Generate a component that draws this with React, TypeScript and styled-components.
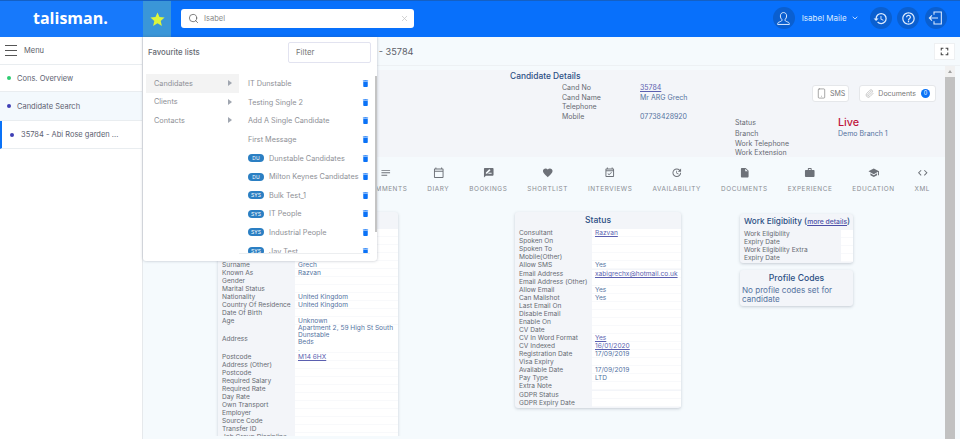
import * as React from "react";
import styled, { createGlobalStyle } from "styled-components";
import { Search, X, Smartphone, Paperclip, ChevronDown } from "lucide-react";
import {
  MdNotes,
  MdOutlineCalendarToday,
  MdRateReview,
  MdFavorite,
  MdOutlineEventAvailable,
  MdOutlineUpdate,
  MdInsertDriveFile,
  MdWork,
  MdSchool,
  MdCode,
  MdDelete,
  MdStar,
  MdRestore,
  MdHelpOutline,
  MdFullscreen,
} from "react-icons/md";

const GlobalStyle = createGlobalStyle`
  html, body {
    margin: 0;
    padding: 0;
    height: 100%;
    overflow: hidden;
    background: #f5fafd;
    font-family: Inter, "Open Sans", sans-serif;
  }
  * { box-sizing: border-box; }
`;

type Row = { label: string; value?: string; link?: boolean; tall?: boolean; gap?: boolean };

const personalRows: Row[] = [
  { label: "Title", value: "Mr" },
  { label: "Forename", value: "ARG" },
  { label: "Middle Name" },
  { label: "Preferred Name" },
  { label: "Surname", value: "Grech" },
  { label: "Known As", value: "Razvan" },
  { label: "Gender" },
  { label: "Marital Status" },
  { label: "Nationality", value: "United Kingdom" },
  { label: "Country Of Residence", value: "United Kingdom" },
  { label: "Date Of Birth" },
  { label: "Age", value: "Unknown" },
  { label: "Address", value: "Apartment 2, 59 High St South\nDunstable\nBeds\n.", tall: true },
  { label: "Postcode", value: "M14 6HX", link: true },
  { label: "Address (Other)" },
  { label: "Postcode" },
  { label: "Required Salary" },
  { label: "Required Rate" },
  { label: "Day Rate" },
  { label: "Own Transport" },
  { label: "Employer" },
  { label: "Source Code" },
  { label: "Transfer ID" },
  { label: "Job Group Discipline" },
];

const statusRows: Row[] = [
  { label: "Consultant", value: "Razvan", link: true },
  { label: "Spoken On" },
  { label: "Spoken To" },
  { label: "Mobile(Other)" },
  { label: "Allow SMS", value: "Yes" },
  { label: "Email Address", value: "xabigrechx@hotmail.co.uk", link: true, gap: true },
  { label: "Email Address (Other)" },
  { label: "Allow Email", value: "Yes" },
  { label: "Can Mailshot", value: "Yes" },
  { label: "Last Email On" },
  { label: "Disable Email" },
  { label: "Enable On" },
  { label: "CV Date" },
  { label: "CV In Word Format", value: "Yes", link: true },
  { label: "CV Indexed", value: "16/01/2020", link: true },
  { label: "Registration Date", value: "17/09/2019" },
  { label: "Visa Expiry" },
  { label: "Available Date", value: "17/09/2019" },
  { label: "Pay Type", value: "LTD" },
  { label: "Extra Note" },
  { label: "GDPR Status", gap: true },
  { label: "GDPR Expiry Date" },
];

const tabs = [
  { label: "COMMENTS", icon: <MdNotes /> },
  { label: "DIARY", icon: <MdOutlineCalendarToday /> },
  { label: "BOOKINGS", icon: <MdRateReview /> },
  { label: "SHORTLIST", icon: <MdFavorite /> },
  { label: "INTERVIEWS", icon: <MdOutlineEventAvailable /> },
  { label: "AVAILABILITY", icon: <MdOutlineUpdate /> },
  { label: "DOCUMENTS", icon: <MdInsertDriveFile /> },
  { label: "EXPERIENCE", icon: <MdWork /> },
  { label: "EDUCATION", icon: <MdSchool /> },
  { label: "XML", icon: <MdCode /> },
];

const favourites = [
  { name: "IT Dunstable" },
  { name: "Testing Single 2" },
  { name: "Add A Single Candidate" },
  { name: "First Message" },
  { name: "Dunstable Candidates", tag: "DU" },
  { name: "Milton Keynes Candidates", tag: "DU" },
  { name: "Bulk Test_1", tag: "SYS" },
  { name: "IT People", tag: "SYS" },
  { name: "Industrial People", tag: "SYS" },
  { name: "Jay Test", tag: "SYS" },
];

const UserIcon = () => (
  <svg width="15" height="15" viewBox="0 0 24 24" fill="none" stroke="currentColor" strokeWidth="1.6">
    <path d="M12 2.5c-3 0-5 2.3-5 5.4 0 2.4 1 4.4 2.4 5.6v1.7c0 1-3.4 2-5.4 3-1 .5-1.4 1.3-1.4 3.3h18.8c0-2-.4-2.8-1.4-3.3-2-1-5.4-2-5.4-3v-1.700c1.400-1.200 2.400-3.200 2.400-5.600 0-3.100-2-5.400-5-5.400z" />
  </svg>
);

const LogoutIcon = () => (
  <svg width="16" height="16" viewBox="0 0 24 24" fill="none" stroke="currentColor" strokeWidth="1.6">
    <path d="M9 7V3h11v18H9v-4" />
    <path d="M15 12H2M6 8l-4 4 4 4" />
  </svg>
);

const App: React.FC = () => {
  const renderRows = (rows: Row[]) =>
    rows.map((row) => (
      <React.Fragment key={row.label + (row.value || "")}>
        <RowLabel $gap={row.gap}>{row.label}</RowLabel>
        <RowValue $gap={row.gap} $link={row.link} $tall={row.tall}>
          {row.link ? <u>{row.value}</u> : row.value}
        </RowValue>
      </React.Fragment>
    ));

  return (
    <>
      <GlobalStyle />
      <Header>
        <LogoCell>
          <Logo>talisman.</Logo>
        </LogoCell>
        <StarCell>
          <MdStar />
        </StarCell>
        <SearchBox>
          <Search size={11} color="#555" strokeWidth={1.6} />
          <SearchText>Isabel</SearchText>
          <X size={9} color="#c4c4c4" />
        </SearchBox>
        <HeaderRight>
          <RoundButton>
            <UserIcon />
          </RoundButton>
          <UserName>
            Isabel Maile <ChevronDown size={8} strokeWidth={2.5} />
          </UserName>
          <RoundButton>
            <MdRestore size={15} />
          </RoundButton>
          <RoundButton>
            <MdHelpOutline size={15} />
          </RoundButton>
          <RoundButton>
            <LogoutIcon />
          </RoundButton>
        </HeaderRight>
      </Header>

      <Body>
        <Sidebar>
          <MenuRow>
            <Burger>
              <i />
              <i />
              <i />
            </Burger>
            Menu
          </MenuRow>
          <NavItem $dot="#2ecc71" $height={27}>Cons. Overview</NavItem>
          <NavItem $dot="#3f3fb5" $height={29} $tinted>Candidate Search</NavItem>
          <NavItem $dot="#3f3fb5" $height={28} $active>35784 - Abi Rose garden ...</NavItem>
        </Sidebar>

        <Main>
          <SubHeader>
            <PageTitle>Candidate - 35784</PageTitle>
            <ExpandButton>
              <MdFullscreen size={13} />
            </ExpandButton>
          </SubHeader>
          <ContentWrap>
            <Content>
              <DetailsPanel>
                <DetailsTitle>Candidate Details</DetailsTitle>
                <DetailsLeft>
                  <DetailLabel>Cand No</DetailLabel>
                  <DetailValue><LinkText>35784</LinkText></DetailValue>
                  <DetailLabel>Cand Name</DetailLabel>
                  <DetailValue>Mr ARG Grech</DetailValue>
                  <DetailLabel>Telephone</DetailLabel>
                  <DetailValue />
                  <DetailLabel>Mobile</DetailLabel>
                  <DetailValue>07738428920</DetailValue>
                </DetailsLeft>
                <DetailsRight>
                  <ActionRow>
                    <ActionButton $compact>
                      <Smartphone size={11} strokeWidth={1.4} color="#777" />
                      SMS
                    </ActionButton>
                    <ActionButton>
                      <Paperclip size={9} strokeWidth={1.4} color="#999" />
                      Documents
                      <CountBadge>0</CountBadge>
                    </ActionButton>
                  </ActionRow>
                  <StatusGrid>
                    <StatusLabel>Status</StatusLabel>
                    <LiveText>Live</LiveText>
                    <DetailLabel>Branch</DetailLabel>
                    <DetailValue>Demo Branch 1</DetailValue>
                    <DetailLabel>Work Telephone</DetailLabel>
                    <DetailValue />
                    <DetailLabel>Work Extension</DetailLabel>
                    <DetailValue />
                  </StatusGrid>
                </DetailsRight>
              </DetailsPanel>

              <TabBar>
                {tabs.map((tab) => (
                  <Tab key={tab.label}>
                    {tab.icon}
                    <span>{tab.label}</span>
                  </Tab>
                ))}
              </TabBar>

              <Cards>
                <PersonalCard>
                  <PersonalTitle />
                  <RowGrid $labelWidth={77}>{renderRows(personalRows)}</RowGrid>
                </PersonalCard>
                <StatusCard>
                  <CardTitle>Status</CardTitle>
                  <RowGrid $labelWidth={77}>{renderRows(statusRows)}</RowGrid>
                </StatusCard>
                <SideColumn>
                  <SmallCard>
                    <EligibilityTitle>
                      Work Eligibility (<u>more details</u>)
                    </EligibilityTitle>
                    <RowGrid $labelWidth={101}>
                      {renderRows([
                        { label: "Work Eligibility" },
                        { label: "Expiry Date" },
                        { label: "Work Eligibility Extra" },
                        { label: "Expiry Date " },
                      ])}
                    </RowGrid>
                  </SmallCard>
                  <SmallCard>
                    <ProfileTitle>Profile Codes</ProfileTitle>
                    <ProfileText>No profile codes set for candidate</ProfileText>
                  </SmallCard>
                </SideColumn>
              </Cards>
            </Content>
            <ScrollTrack>
              <ScrollArrow />
              <ScrollThumb />
            </ScrollTrack>
          </ContentWrap>
        </Main>
      </Body>

      <FavouritesMenu>
        <FavHeader>
          <FavTitle>Favourite lists</FavTitle>
          <FilterBox>Filter</FilterBox>
        </FavHeader>
        <FavBody>
          <CategoryList>
            <Category $active>Candidates</Category>
            <Category>Clients</Category>
            <Category>Contacts</Category>
          </CategoryList>
          <FavList>
            {favourites.map((fav) => (
              <FavRow key={fav.name}>
                {fav.tag && <FavTag>{fav.tag}</FavTag>}
                <FavName>{fav.name}</FavName>
                <MdDelete size={9} color="#0a72f7" />
              </FavRow>
            ))}
          </FavList>
          <FavScroll />
        </FavBody>
      </FavouritesMenu>
    </>
  );
};

const Header = styled.header`
  height: 37px;
  display: flex;
  align-items: stretch;
  background: #0870fb;
  border-top: 1px solid #1460c4;
  color: #fff;
`;

const LogoCell = styled.div`
  width: 143px;
  background: #1779fb;
  padding: 5px 0 0 33px;
`;

const Logo = styled.div`
  font-family: "Open Sans", sans-serif;
  font-weight: 700;
  font-size: 16px;
  line-height: 24px;
  color: #fff;
`;

const StarCell = styled.div`
  width: 28px;
  background: #3a96d8;
  display: flex;
  align-items: center;
  justify-content: center;
  font-size: 17px;
  color: #dcf53c;
`;

const SearchBox = styled.div`
  width: 233px;
  height: 19px;
  margin: 8px 0 0 10px;
  padding: 0 5px 0 7px;
  display: flex;
  align-items: center;
  background: #fff;
  border-radius: 3px;
`;

const SearchText = styled.span`
  flex: 1;
  margin-left: 5px;
  font-size: 7.5px;
  color: #888;
`;

const HeaderRight = styled.div`
  margin-left: auto;
  padding: 6px 13px 0 0;
  display: flex;
  align-items: flex-start;
  gap: 5.6px;
`;

const RoundButton = styled.div`
  width: 22px;
  height: 22px;
  border-radius: 50%;
  background: #0a5fd0;
  display: flex;
  align-items: center;
  justify-content: center;
  color: #dcebff;
`;

const UserName = styled.div`
  height: 22px;
  width: 64px;
  padding-left: 1.5px;
  display: flex;
  align-items: center;
  gap: 4px;
  font-size: 8px;
  white-space: nowrap;
  color: #dcebff;
`;

const Body = styled.div`
  display: flex;
  height: 402px;
`;

const Sidebar = styled.aside`
  width: 143px;
  flex: none;
  background: #fff;
  border-right: 1px solid #e6e9ec;
`;

const MenuRow = styled.div`
  height: 28px;
  display: flex;
  align-items: center;
  padding: 0 0 0 5px;
  gap: 7px;
  font-size: 7.5px;
  color: #5c6068;
  border-bottom: 1px solid #e9edf0;
`;

const Burger = styled.div`
  width: 12px;
  display: flex;
  flex-direction: column;
  gap: 3.6px;
  i {
    display: block;
    height: 1px;
    background: #555;
  }
`;

const NavItem = styled.div<{ $dot: string; $height: number; $tinted?: boolean; $active?: boolean }>`
  height: ${(p) => p.$height}px;
  display: flex;
  align-items: center;
  padding-left: ${(p) => (p.$active ? 8 : 7)}px;
  gap: ${(p) => (p.$active ? 7 : 6)}px;
  font-size: 7.5px;
  color: #5c6170;
  white-space: nowrap;
  background: ${(p) => (p.$tinted ? "#f3f9fd" : "#fff")};
  border-left: ${(p) => (p.$active ? "2px solid #0a72f7" : "0")};
  border-bottom: 1px solid #e9edf0;
  &::before {
    content: "";
    width: 4px;
    height: 4px;
    border-radius: 50%;
    background: ${(p) => p.$dot};
  }
`;

const Main = styled.main`
  flex: 1;
  min-width: 0;
  display: flex;
  flex-direction: column;
  background: #f5fafd;
`;

const SubHeader = styled.div`
  height: 29px;
  flex: none;
  display: flex;
  align-items: center;
  justify-content: space-between;
  padding: 0 5px 0 189px;
  border-bottom: 1px solid #edf1f4;
`;

const PageTitle = styled.div`
  font-size: 9.2px;
  color: #5c6068;
`;

const ExpandButton = styled.div`
  width: 21px;
  height: 17px;
  background: #fff;
  border: 1px solid #eef0f2;
  display: flex;
  align-items: center;
  justify-content: center;
  color: #444;
`;

const ContentWrap = styled.div`
  flex: 1;
  min-height: 0;
  display: flex;
`;

const Content = styled.div`
  width: 802px;
  flex: none;
  padding-top: 4px;
  overflow: hidden;
  height: 370px;
`;

const DetailsPanel = styled.section`
  height: 87px;
  background: #f3f5f9;
  display: grid;
  grid-template-columns: 592px 1fr;
  grid-template-rows: 13px 1fr;
  overflow: hidden;
`;

const DetailsTitle = styled.h2`
  grid-column: 1 / 3;
  margin: 0;
  padding: 0 0 0 367px;
  font-size: 8.4px;
  line-height: 12px;
  font-weight: 500;
  color: #2c4f84;
`;

const DetailsLeft = styled.div`
  padding: 0 0 0 419px;
  display: grid;
  grid-template-columns: 78px 1fr;
  grid-auto-rows: 9.6px;
  align-content: start;
`;

const DetailLabel = styled.div`
  font-size: 7px;
  line-height: 9.6px;
  color: #666a72;
  white-space: nowrap;
`;

const DetailValue = styled.div`
  font-size: 7px;
  line-height: 9.6px;
  color: #54739f;
  white-space: nowrap;
`;

const LinkText = styled.u`
  color: #5b5fb0;
`;

const DetailsRight = styled.div`
  display: flex;
  flex-direction: column;
  align-items: flex-end;
`;

const ActionRow = styled.div`
  display: flex;
  gap: 10px;
  padding: 2px 9px 0 0;
`;

const ActionButton = styled.div<{ $compact?: boolean }>`
  height: 17px;
  padding: 0 ${(p) => (p.$compact ? 3 : 5)}px;
  display: flex;
  align-items: center;
  gap: ${(p) => (p.$compact ? 3 : 4)}px;
  background: #fff;
  border: 1px solid #e5e7ea;
  border-radius: 3px;
  font-size: 7px;
  color: #777;
`;

const CountBadge = styled.span`
  width: 9px;
  height: 9px;
  margin-left: 1px;
  border-radius: 50%;
  background: #0a72f7;
  color: #fff;
  font-size: 5.5px;
  line-height: 9px;
  text-align: center;
`;

const StatusGrid = styled.div`
  width: 210px;
  margin-top: 15px;
  display: grid;
  grid-template-columns: 103px 1fr;
  grid-template-rows: 12px 9.6px 9.6px 9.6px;
`;

const StatusLabel = styled(DetailLabel)`
  line-height: 12px;
`;

const LiveText = styled.div`
  font-size: 10.8px;
  line-height: 12px;
  font-weight: 500;
  color: #c0143c;
`;

const TabBar = styled.nav`
  height: 48px;
  display: flex;
  justify-content: flex-end;
  gap: 20px;
  padding: 10px 15px 0 0;
`;

const Tab = styled.div`
  display: flex;
  flex-direction: column;
  align-items: center;
  gap: 6.5px;
  color: #6d7178;
  svg {
    font-size: 11.5px;
  }
  span {
    font-size: 6.4px;
    line-height: 9px;
    letter-spacing: 0.56px;
    color: #8a8d93;
    white-space: nowrap;
  }
`;

const Cards = styled.div`
  display: flex;
  align-items: flex-start;
  padding: 7px 0 0 75px;
`;

const Card = styled.section`
  background: #f3f5f9;
  border-radius: 3px;
  box-shadow: 0 1px 3px rgba(60, 70, 90, 0.25);
  overflow: hidden;
`;

const PersonalCard = styled(Card)`
  width: 180px;
  flex: none;
`;

const StatusCard = styled(Card)`
  width: 166px;
  flex: none;
  margin-left: 117px;
  padding-bottom: 1px;
`;

const SideColumn = styled.div`
  width: 113px;
  flex: none;
  margin: 2px 0 0 59px;
  display: flex;
  flex-direction: column;
  gap: 7px;
`;

const SmallCard = styled(Card)`
  padding-bottom: 1px;
`;

const CardTitle = styled.h3`
  margin: 0;
  height: 17px;
  font-size: 8.6px;
  line-height: 17px;
  font-weight: 500;
  text-align: center;
  color: #2c4f84;
`;

const PersonalTitle = styled(CardTitle)`
  height: 16.5px;
`;

const EligibilityTitle = styled.h3`
  margin: 0;
  padding: 0 0 0 4px;
  height: 16px;
  font-size: 8.2px;
  line-height: 15px;
  font-weight: 500;
  color: #2c4f84;
  white-space: nowrap;
  u {
    font-size: 6.8px;
    color: #4c4fa8;
  }
`;

const ProfileTitle = styled(CardTitle)`
  height: 16px;
  line-height: 16px;
`;

const ProfileText = styled.p`
  margin: 0;
  padding: 0 2px 1px 2px;
  font-size: 8.1px;
  line-height: 9px;
  color: #54739f;
`;

const RowGrid = styled.div<{ $labelWidth: number }>`
  display: grid;
  grid-template-columns: ${(p) => p.$labelWidth}px 1fr;
`;

const RowLabel = styled.div<{ $gap?: boolean }>`
  display: flex;
  align-items: center;
  min-height: 8px;
  margin-top: ${(p) => (p.$gap ? 1 : 0)}px;
  padding-left: 4px;
  font-size: 6.6px;
  line-height: 8px;
  color: #666a72;
  white-space: nowrap;
`;

const RowValue = styled.div<{ $gap?: boolean; $link?: boolean; $tall?: boolean }>`
  min-height: 8px;
  margin-top: ${(p) => (p.$gap ? 1 : 0)}px;
  padding-left: 3px;
  background: #fff;
  box-shadow: inset 0 -1px 0 #f8f9fb;
  font-size: 6.6px;
  line-height: ${(p) => (p.$tall ? 7.2 : 8)}px;
  color: ${(p) => (p.$link ? "#5b5fb0" : "#54739f")};
  white-space: pre-line;
`;

const ScrollTrack = styled.div`
  width: 10px;
  flex: none;
  background: #f1f1f1;
  display: flex;
  flex-direction: column;
`;

const ScrollArrow = styled.div`
  height: 11px;
  flex: none;
  position: relative;
  &::after {
    content: "";
    position: absolute;
    left: 3px;
    top: 4px;
    border-left: 2px solid transparent;
    border-right: 2px solid transparent;
    border-bottom: 3px solid #a0a0a0;
  }
`;

const ScrollThumb = styled.div`
  flex: 1;
  background: #c1c1c1;
`;

const FavouritesMenu = styled.div`
  position: absolute;
  left: 143px;
  top: 37px;
  width: 234px;
  height: 224px;
  background: #fff;
  border-radius: 0 0 3px 3px;
  box-shadow: 0 0 3px rgba(60, 70, 90, 0.35);
  overflow: hidden;
`;

const FavHeader = styled.div`
  height: 37px;
  display: flex;
  align-items: flex-start;
  justify-content: space-between;
  padding: 5px 6px 0 5px;
`;

const FavTitle = styled.div`
  padding-top: 5px;
  font-size: 7.8px;
  line-height: 10px;
  font-weight: 500;
  color: #666a72;
`;

const FilterBox = styled.div`
  width: 83px;
  height: 21px;
  padding-left: 7px;
  border: 1px solid #e2e3f0;
  border-radius: 2px;
  font-size: 7.8px;
  line-height: 18px;
  color: #777;
`;

const FavBody = styled.div`
  display: flex;
  align-items: flex-start;
  height: 180px;
  padding: 0 0 0 3px;
`;

const CategoryList = styled.div`
  width: 93px;
  flex: none;
`;

const Category = styled.div<{ $active?: boolean }>`
  height: 18.6px;
  padding: 0 7px 0 8px;
  display: flex;
  align-items: center;
  justify-content: space-between;
  font-size: 7.3px;
  color: #8e9096;
  background: ${(p) => (p.$active ? "#f3f3f3" : "transparent")};
  &::after {
    content: "";
    border-top: 3px solid transparent;
    border-bottom: 3px solid transparent;
    border-left: 4px solid #a0a6b0;
  }
`;

const FavList = styled.div`
  width: 131px;
  height: 180px;
  flex: none;
  padding: 0.4px 0 0 9px;
  overflow: hidden;
  border-bottom: 1px solid #eceef0;
`;

const FavRow = styled.div`
  height: 18.6px;
  display: flex;
  align-items: center;
  font-size: 7.3px;
  color: #8e9096;
  white-space: nowrap;
`;

const FavTag = styled.span`
  width: 16px;
  height: 8px;
  margin-right: 5px;
  flex: none;
  border-radius: 4px;
  background: #2b7fc3;
  color: #fff;
  font-size: 5px;
  line-height: 8px;
  text-align: center;
`;

const FavName = styled.span`
  flex: 1;
`;

const FavScroll = styled.div`
  width: 2.5px;
  height: 156px;
  margin: 2px 0 0 5px;
  background: #c4c4c4;
`;

export default App;
